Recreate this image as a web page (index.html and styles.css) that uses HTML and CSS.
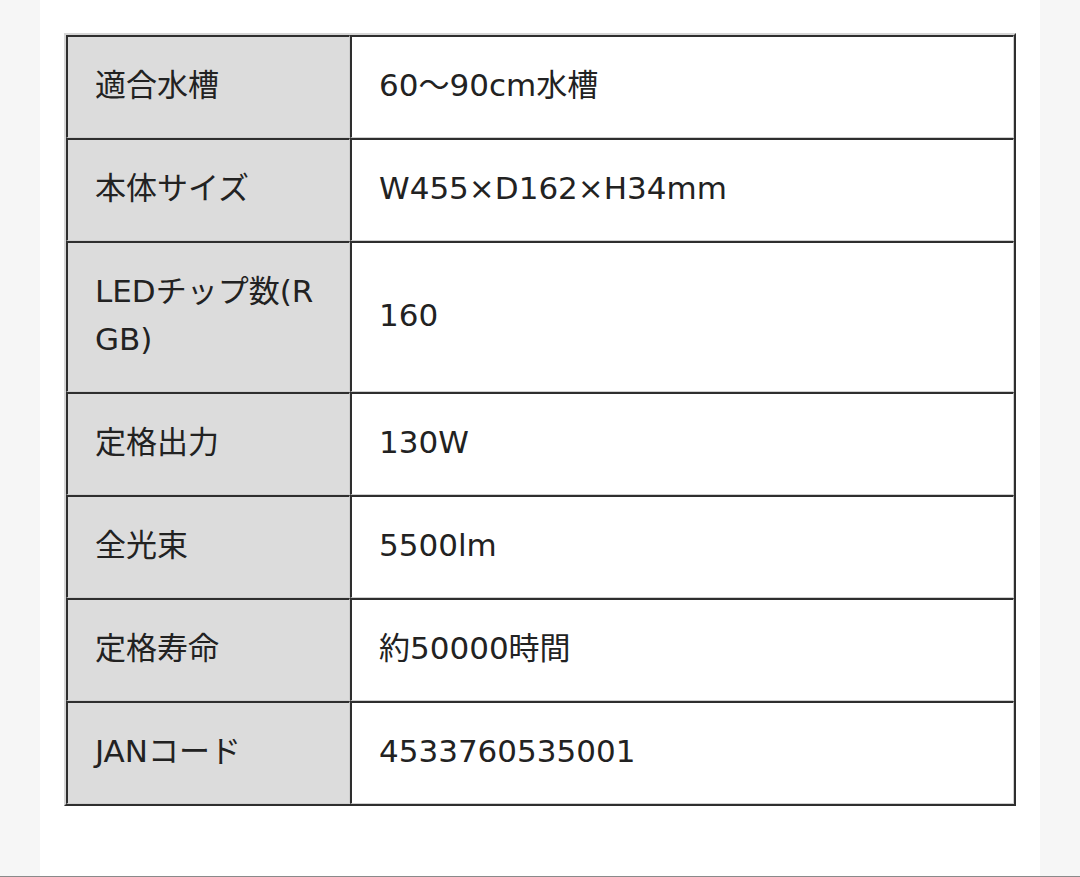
FILE: index.html
```html
<!DOCTYPE html>
<html lang="ja">
<head>
<meta charset="utf-8">
<link rel="stylesheet" href="styles.css">
</head>
<body>
<div class="page">
  <div class="content">
    <table class="spec">
      <colgroup><col class="c1"><col class="c2"></colgroup>
      <tbody>
        <tr><th>適合水槽</th><td>60〜90cm水槽</td></tr>
        <tr><th>本体サイズ</th><td>W455×D162×H34mm</td></tr>
        <tr><th>LEDチップ数(RGB)</th><td>160</td></tr>
        <tr><th>定格出力</th><td>130W</td></tr>
        <tr><th>全光束</th><td>5500lm</td></tr>
        <tr><th>定格寿命</th><td>約50000時間</td></tr>
        <tr><th>JANコード</th><td>4533760535001</td></tr>
      </tbody>
    </table>
  </div>
</div>
</body>
</html>
```

FILE: styles.css
```css
html, body {
  margin: 0;
  padding: 0;
}
body {
  background: #f6f6f6;
  font-family: "DejaVu Sans", "Noto Sans CJK JP", sans-serif;
  color: #222;
}
.page {
  height: 876px;
  border-bottom: 1px solid #8a8a8a;
  display: flex;
  justify-content: center;
}
.content {
  width: 1000px;
  background: #fff;
  padding: 33px 24px 0;
  box-sizing: border-box;
}
.spec {
  width: 100%;
  border-collapse: separate;
  border-spacing: 0;
  border-top: 2px solid #d6d6d6;
  border-left: 2px solid #d6d6d6;
  border-right: 2px solid #2e2e2e;
  border-bottom: 2px solid #2e2e2e;
  table-layout: fixed;
}
.c1 { width: 284px; }
.spec th, .spec td {
  border-top: 2px solid #2e2e2e;
  border-left: 2px solid #2e2e2e;
  border-right: 1px solid #cfcfcf;
  border-bottom: 1px solid #cfcfcf;
  padding: 24px 27px 28px;
  font-size: 31px;
  line-height: 48px;
  font-weight: normal;
  text-align: left;
  vertical-align: middle;
  word-break: break-all;
}
.spec th {
  background: #dcdcdc;
}
.spec td {
  background: #fff;
}
```
